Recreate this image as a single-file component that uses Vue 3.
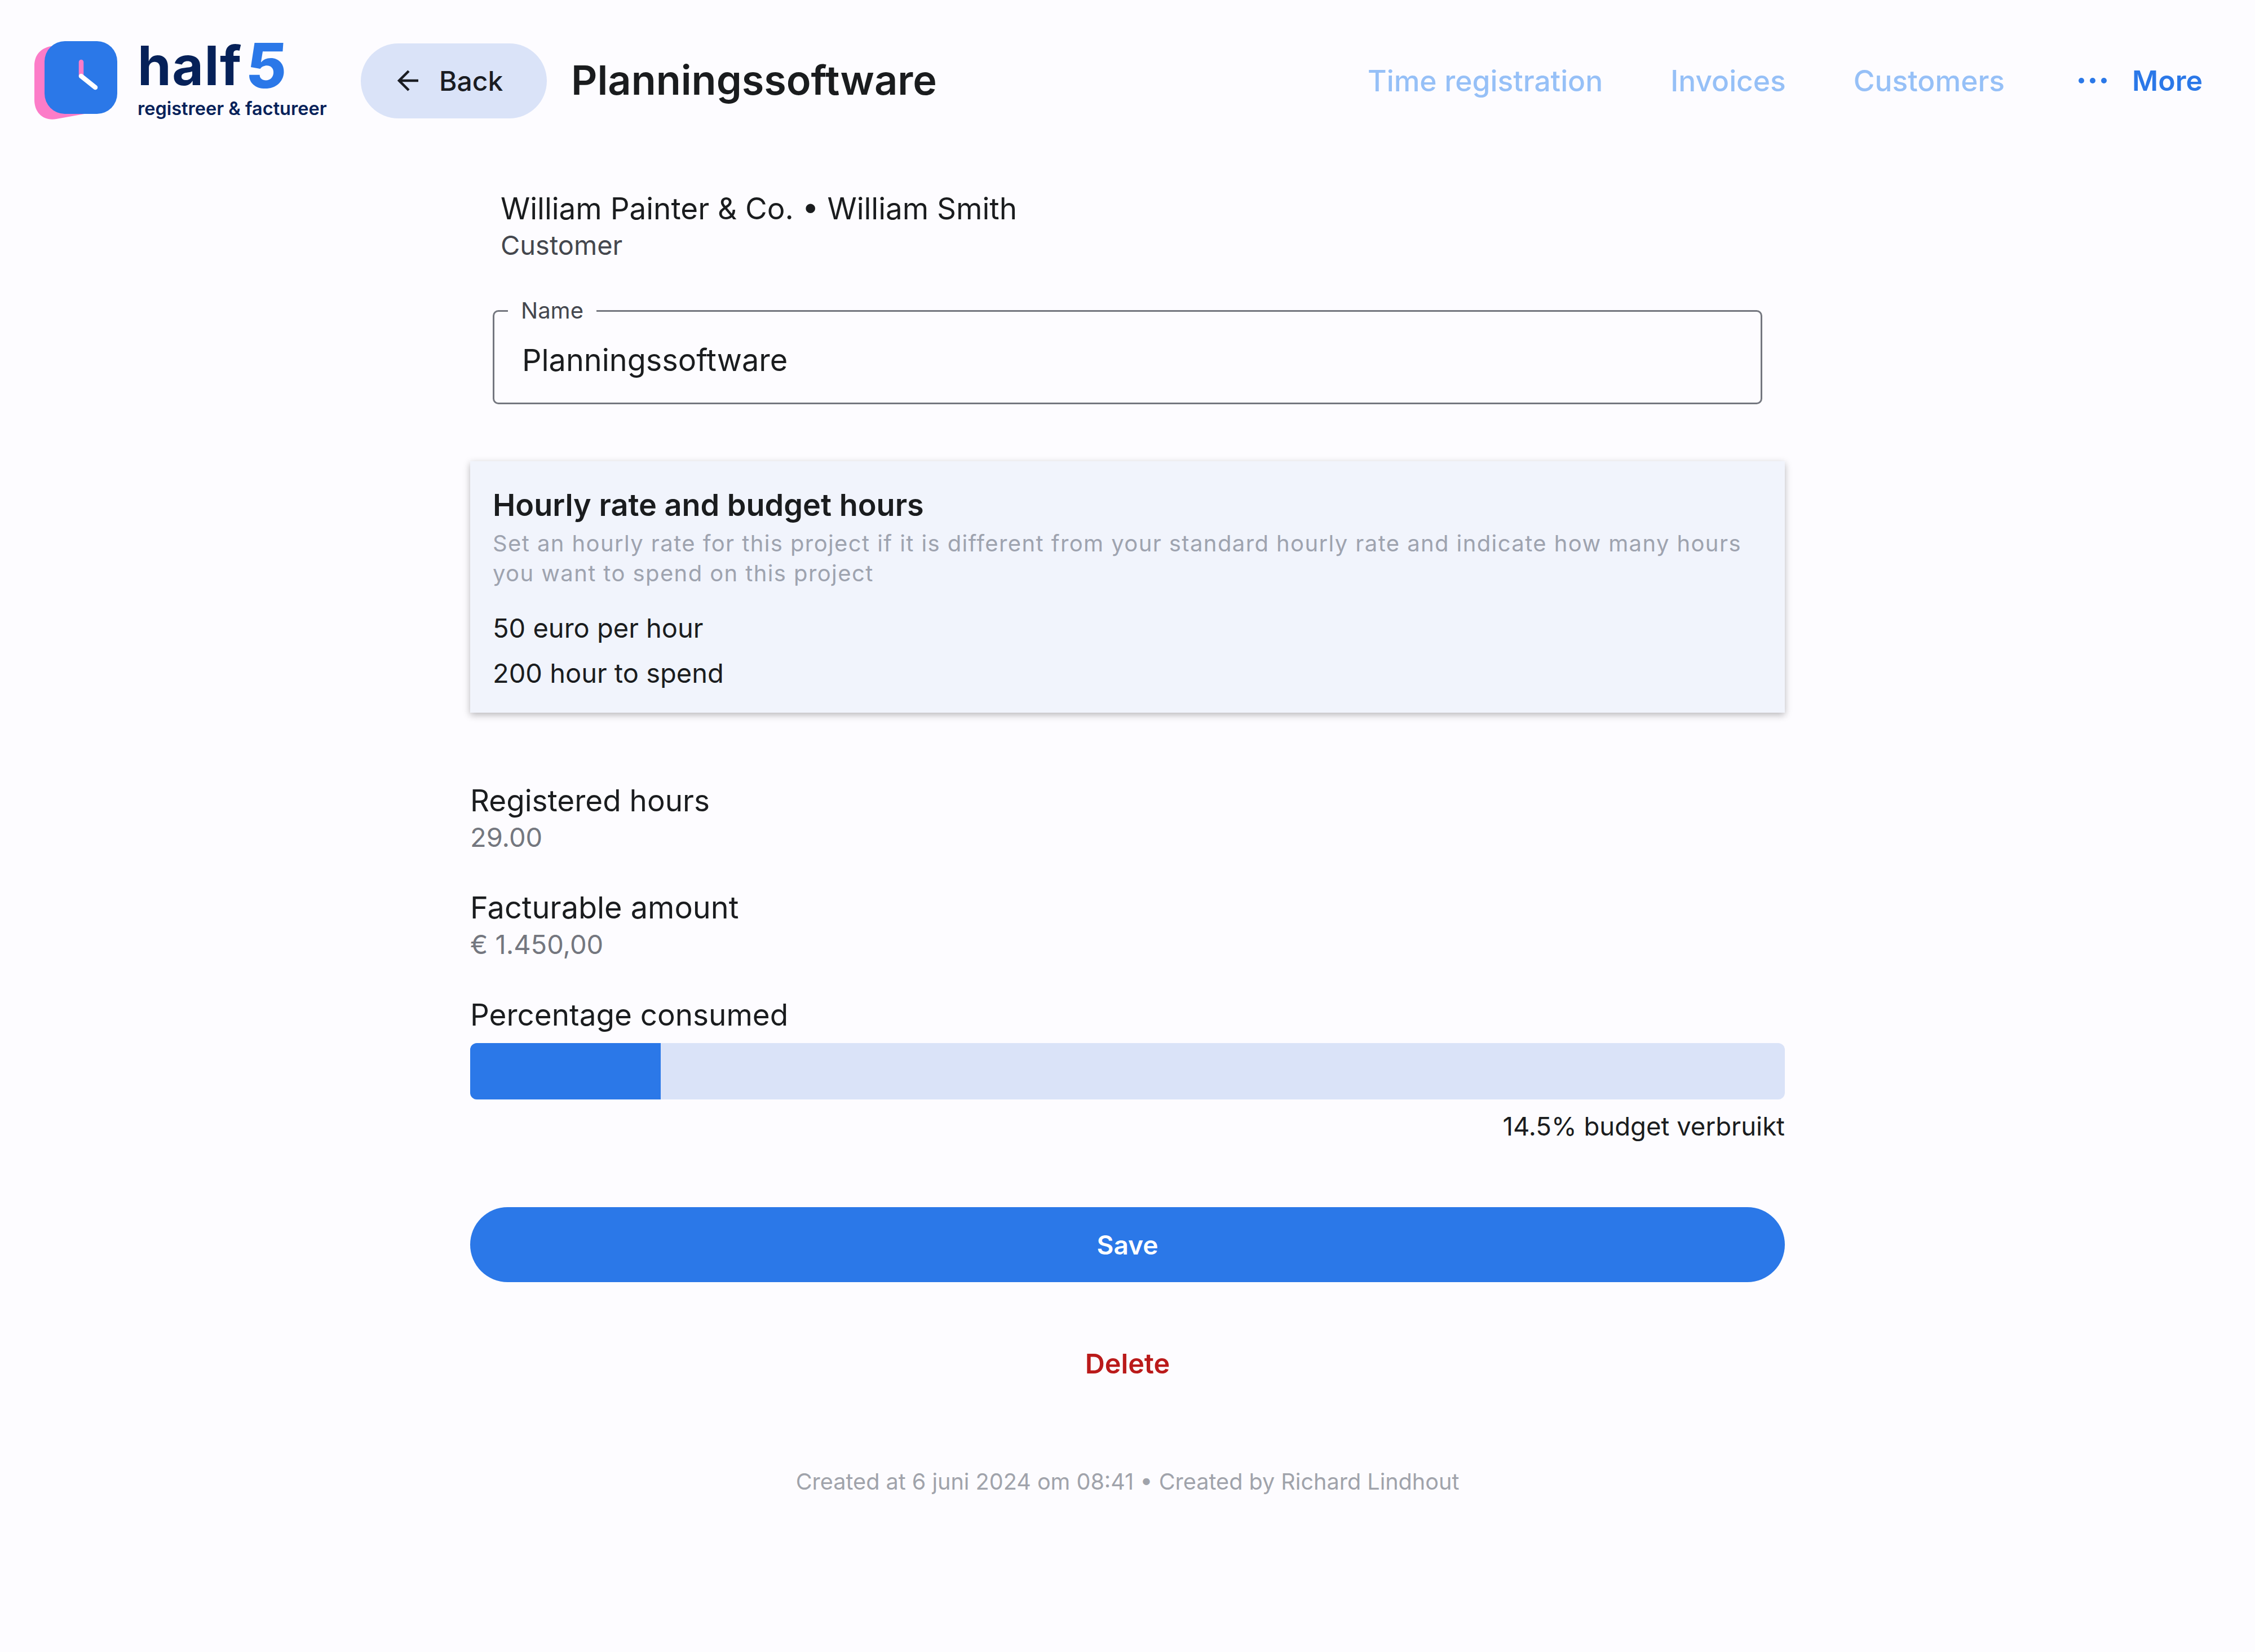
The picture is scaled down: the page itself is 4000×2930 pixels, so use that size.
<template>
  <div class="page">
    <header class="topbar">
      <div class="logo">
        <svg class="logo-mark" viewBox="0 0 150 140" width="150" height="140">
          <path d="M30 9 C12 13 1 24 1 44 V104 C1 128 18 142 40 138 L90 129 H60 V9 Z" fill="#fc7cc8" />
          <rect x="19" y="0" width="129" height="129" rx="36" fill="#2b78e8" />
          <path d="M84 37 V62" stroke="#fc7cc8" stroke-width="8.5" stroke-linecap="round" />
          <path d="M84 62 L109 82" stroke="#fff" stroke-width="8.5" stroke-linecap="round" />
        </svg>
        <div class="logo-text">
          <div class="logo-name"><span>half</span><span class="logo-five">5</span></div>
          <div class="logo-sub">registreer &amp; factureer</div>
        </div>
      </div>
      <button class="back">
        <svg viewBox="0 0 40 40" width="40" height="40">
          <path d="M37 20 H4 M20 3 L3 20 L20 37" fill="none" stroke="#1a1c22" stroke-width="4.5" />
        </svg>
        <span>Back</span>
      </button>
      <h1 class="title">Planningssoftware</h1>
      <nav class="nav">
        <a v-for="item in navItems" :key="item" class="nav-link">{{ item }}</a>
        <a class="nav-more">
          <svg viewBox="0 0 52 12" width="52" height="12">
            <circle cx="6" cy="6" r="5" fill="#2b78e8" />
            <circle cx="26" cy="6" r="5" fill="#2b78e8" />
            <circle cx="46" cy="6" r="5" fill="#2b78e8" />
          </svg>
          <span>More</span>
        </a>
      </nav>
    </header>

    <main class="content">
      <div class="customer">
        <div class="customer-name">William Painter &amp; Co. • William Smith</div>
        <div class="customer-label">Customer</div>
      </div>

      <fieldset class="field">
        <legend>Name</legend>
        <div class="field-value">Planningssoftware</div>
      </fieldset>

      <section class="card">
        <h2>Hourly rate and budget hours</h2>
        <p>Set an hourly rate for this project if it is different from your standard hourly rate and indicate how many hours you want to spend on this project</p>
        <div class="card-rows">
          <div v-for="row in budgetRows" :key="row" class="card-row">{{ row }}</div>
        </div>
      </section>

      <div class="stat stat-first">
        <div class="stat-label">Registered hours</div>
        <div class="stat-value">29.00</div>
      </div>
      <div class="stat">
        <div class="stat-label stat-label-wide">Facturable amount</div>
        <div class="stat-value">€ 1.450,00</div>
      </div>

      <div class="stat">
        <div class="stat-label">Percentage consumed</div>
        <div class="progress">
          <div class="progress-fill" :style="{ width: consumed + '%' }"></div>
        </div>
        <div class="progress-text">{{ consumed }}% budget verbruikt</div>
      </div>

      <button class="save">Save</button>
      <button class="delete">Delete</button>
      <div class="meta">Created at 6 juni 2024 om 08:41 • Created by Richard Lindhout</div>
    </main>
  </div>
</template>

<script setup>
const navItems = ['Time registration', 'Invoices', 'Customers'];
const budgetRows = ['50 euro per hour', '200 hour to spend'];
const consumed = 14.5;
</script>

<style>
body {
  background: #fdfcff;
}
</style>

<style scoped>
.page {
  min-height: 2930px;
  background: #fdfcff;
  color: #1a1c1e;
  font-family: Inter, "Noto Sans", sans-serif;
}

.topbar {
  height: 286px;
  display: flex;
  align-items: center;
  padding: 0 93px 0 60px;
}

.logo {
  display: flex;
  align-items: flex-start;
  width: 580px;
  height: 140px;
  gap: 34px;
}

.logo-mark {
  flex: none;
}

.logo-name {
  display: flex;
  align-items: flex-end;
  height: 86px;
  font-size: 96px;
  line-height: 86px;
  font-weight: 700;
  letter-spacing: 1.5px;
  color: #062159;
}

.logo-five {
  margin-left: 7px;
  font-size: 110px;
  font-weight: 800;
  color: #2b78e8;
  transform: skewX(-4deg);
}

.logo-sub {
  margin-top: 14px;
  font-size: 32.5px;
  line-height: 40px;
  font-weight: 600;
  color: #062159;
  white-space: nowrap;
}

.back {
  display: flex;
  align-items: center;
  gap: 34px;
  width: 330px;
  height: 133px;
  padding: 0 0 0 65px;
  border: 0;
  border-radius: 67px;
  background: #dae3f8;
  color: #1a1c22;
  font: 500 48px Inter, sans-serif;
}

.title {
  margin: 0 0 0 43px;
  padding-bottom: 4px;
  font-size: 72px;
  font-weight: 600;
}

.nav {
  margin-left: auto;
  display: flex;
  align-items: center;
  gap: 120px;
  font-size: 51.5px;
  font-weight: 500;
}

.nav-link {
  color: #96c0f7;
}

.nav-more {
  display: flex;
  align-items: center;
  gap: 44px;
  margin-left: 10px;
  font-size: 50px;
  color: #2b78e8;
  font-weight: 600;
}

.content {
  width: 2332px;
  margin: 0 auto;
}

.customer {
  padding: 51px 0 0 54px;
}

.customer-name {
  font-size: 53px;
  line-height: 66px;
}

.customer-label {
  font-size: 47px;
  line-height: 64px;
  color: #44474e;
}

.field {
  height: 189px;
  margin: 61px 40px 0;
  padding: 0 0 0 49px;
  border: 3px solid #74777f;
  border-radius: 10px;
  box-sizing: border-box;
}

.field legend {
  margin-left: -25px;
  padding: 0 23px;
  font-size: 40px;
  line-height: 46px;
  color: #44474e;
}

.field-value {
  font-size: 54px;
  line-height: 66px;
  padding-top: 32px;
}

.card {
  margin-top: 101px;
  padding: 45px 40px 30px;
  background: #f1f4fc;
  box-shadow: 0 4px 12px rgba(0, 0, 0, 0.28);
}

.card h2 {
  margin: 0;
  font-size: 54px;
  line-height: 66px;
  font-weight: 600;
}

.card p {
  margin: 8px 0 0;
  font-size: 40px;
  line-height: 53px;
  letter-spacing: 1.4px;
  color: #9ea3af;
}

.card-rows {
  margin-top: 31px;
}

.card-row {
  font-size: 47px;
  line-height: 80px;
}

.stat {
  margin-top: 60px;
}

.stat-first {
  margin-top: 123px;
}

.stat-label {
  font-size: 53px;
  line-height: 66px;
}

.stat-label-wide {
  font-size: 54px;
}

.stat-value {
  font-size: 47px;
  line-height: 64px;
  color: #74777f;
}

.progress {
  height: 100px;
  margin-top: 17px;
  border-radius: 12px;
  overflow: hidden;
  background: #dae3f8;
}

.progress-fill {
  height: 100%;
  background: #2b78e8;
}

.progress-text {
  margin-top: 18px;
  text-align: right;
  font-size: 45.5px;
  line-height: 60px;
}

.save {
  display: block;
  width: 100%;
  height: 133px;
  margin-top: 113px;
  border: 0;
  border-radius: 67px;
  background: #2b78e8;
  color: #fff;
  font: 600 46px Inter, sans-serif;
}

.delete {
  display: block;
  width: 100%;
  height: 60px;
  margin-top: 114px;
  padding: 0;
  border: 0;
  background: none;
  color: #ba1a1a;
  font: 600 48.5px Inter, sans-serif;
}

.meta {
  margin-top: 155px;
  text-align: center;
  font-size: 39.6px;
  line-height: 50px;
  color: #a0a3ab;
}
</style>
